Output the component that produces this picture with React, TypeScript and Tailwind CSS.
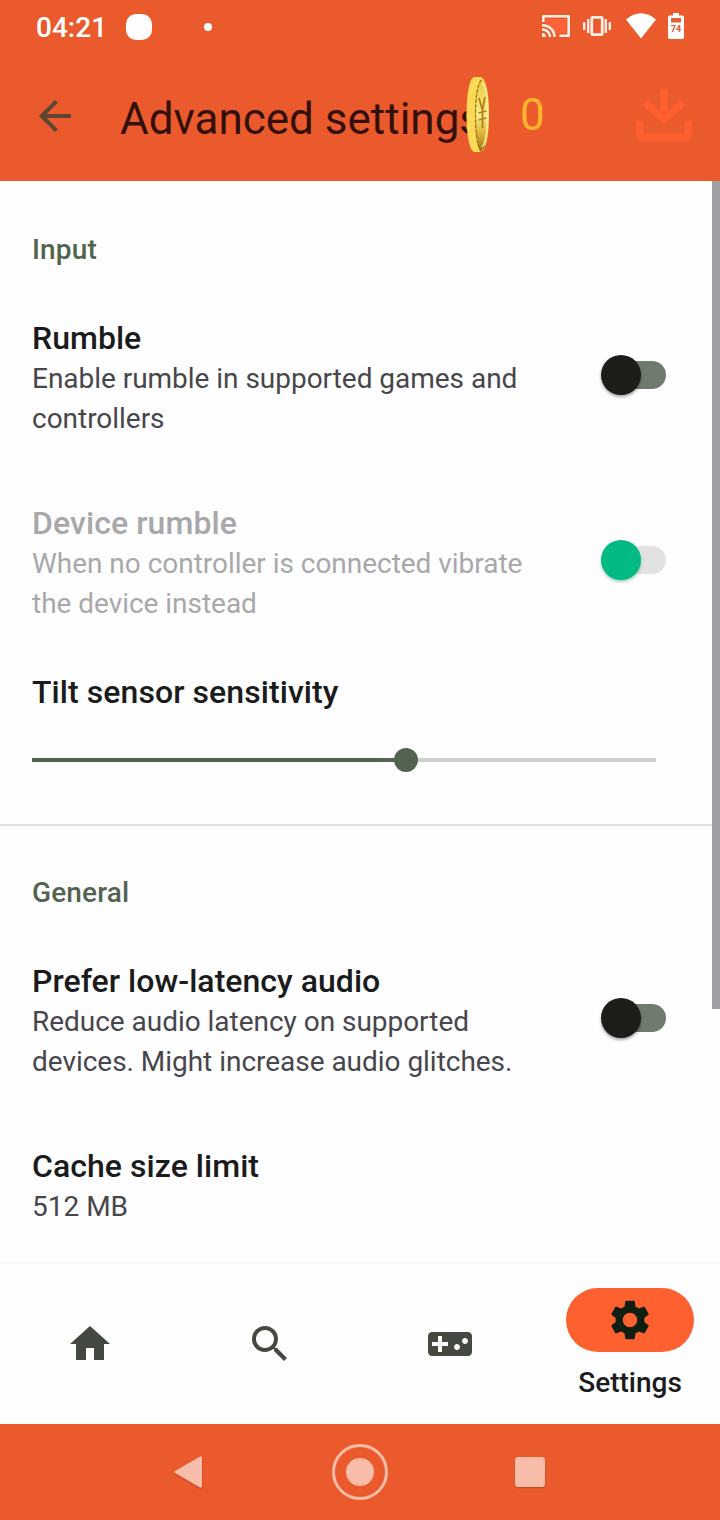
import React, { useState } from "react";
import {
  MdArrowBack,
  MdHome,
  MdSearch,
  MdSettings,
  MdVideogameAsset,
} from "react-icons/md";

type SwitchRowProps = {
  title: string;
  lines: string[];
  disabled?: boolean;
};

function StatusBar() {
  return (
    <div className="flex h-[54px] items-center justify-between pl-9 pr-9 text-white">
      <div className="flex items-center">
        <span className="w-[90px] pt-0.5 text-[28px] leading-[52px] font-medium">
          04:21
        </span>
        <span className="h-[26px] w-[26px] rounded-[10px] bg-white" />
        <span className="ml-[52px] h-2 w-2 rounded-full bg-white" />
      </div>
      <div className="flex items-center pb-0.5">
        <svg width="28" height="22" viewBox="0 0 28 22" fill="none">
          <path d="M4 4h20v14H15L4 8z" fill="#ff6138" />
          <path
            d="M1.300 7V1.300h25.400v19.400H17.500"
            stroke="#ffeee6"
            strokeWidth="2.600"
            strokeLinejoin="round"
          />
          <path
            d="M0 10.200A11.800 11.800 0 0 1 12.500 22M0 14.600a7.400 7.400 0 0 1 8 7.400"
            stroke="#ffeee6"
            strokeWidth="2.600"
          />
          <path d="M0 18a4 4 0 0 1 4 4H0z" fill="#ffeee6" />
        </svg>
        <svg
          className="ml-[13px]"
          width="28"
          height="22"
          viewBox="0 0 28 22"
          fill="none"
          stroke="#ffeee6"
        >
          <rect
            x="8.800"
            y="2.300"
            width="10.400"
            height="17.400"
            rx="1"
            strokeWidth="2.800"
          />
          <path d="M1.200 7v8M5.200 4v14M22.800 4v14M26.800 7v8" strokeWidth="2.400" />
        </svg>
        <svg
          className="ml-[15px]"
          width="30"
          height="26"
          viewBox="0 0 30 26"
          fill="#fff"
        >
          <path d="M0 6.500Q15-6 30 6.500L15 25.500z" />
        </svg>
        <svg
          className="ml-3"
          width="16"
          height="26"
          viewBox="0 0 16 26"
          fill="#fff"
        >
          <path d="M5 0h6v2.500h3.500Q16 2.500 16 4v20.500Q16 26 14.500 26h-13Q0 26 0 24.500V4Q0 2.500 1.500 2.500H5z" />
          <path d="M3 5h10v4.500H3z" fill="#e06239" />
          <text
            x="8"
            y="18.500"
            textAnchor="middle"
            fontSize="9"
            fontWeight="700"
            fill="#d9572e"
          >
            74
          </text>
        </svg>
      </div>
    </div>
  );
}

function Coin() {
  return (
    <svg
      className="absolute top-[23px] left-[466px]"
      width="24"
      height="75"
      viewBox="0 0 24 75"
    >
      <defs>
        <linearGradient id="face" x1="0" y1="0" x2="0" y2="1">
          <stop offset="0" stopColor="#e5c64a" />
          <stop offset=".25" stopColor="#f3da62" />
          <stop offset=".5" stopColor="#fbe98c" />
          <stop offset=".75" stopColor="#dfb63a" />
          <stop offset="1" stopColor="#9a7418" />
        </linearGradient>
      </defs>
      <path
        d="M8 0h7C21 3 23 20 23 37.500S21 74 14 75H8C3 73 .5 56 .5 37.500S3 2 8 0z"
        fill="#fdda55"
      />
      <path
        d="M15 2.500C20 4 22.500 20 22.500 37.500S20 72 14.500 74C11 68 9.500 54 9.500 37.500S11.500 8 15 2.500z"
        fill="url(#face)"
      />
      <path
        d="M15 3C11.500 8 9.500 21 9.500 37.500S11 68 14.500 74c2-.5 3-3 4-6"
        stroke="#967012"
        strokeWidth="1.200"
        strokeDasharray="4 1"
        fill="none"
      />
      <path
        d="M16 6c4 3 5.500 16 5.500 31.500S19.500 67 16 70"
        stroke="#fdf0a6"
        strokeWidth="1.200"
        fill="none"
      />
      <path
        d="M13 21l3.500 12L19 20M16.500 31v20M12.500 36l8-2M12.500 43l8-2"
        stroke="#ad8414"
        strokeWidth="1.800"
        fill="none"
      />
    </svg>
  );
}

function AppBar() {
  return (
    <div className="relative flex h-[127px] items-center pb-[3px]">
      <MdArrowBack className="ml-[31px] size-12 text-[#5b4635]" />
      <h1 className="ml-[41px] w-[400px] pt-[5px] text-[44px] leading-[56px] font-normal whitespace-nowrap text-[#34100a]">
        Advanced settings
      </h1>
      <Coin />
      <span className="-mt-0.5 text-[44px] leading-[56px] text-[#fbb42b]">
        0
      </span>
      <svg
        className="absolute top-[35px] left-[636px]"
        width="56"
        height="53"
        viewBox="0 0 56 53"
        fill="none"
        stroke="#ff5f2f"
        strokeWidth="7.500"
      >
        <path d="M28 0v29" />
        <path d="M11.500 16L28 30.500L44.500 16" strokeLinecap="round" strokeLinejoin="round" />
        <path d="M3.750 32v12.500q0 4 4 4h40.500q4 0 4-4V32" />
      </svg>
    </div>
  );
}

function SwitchRow({ title, lines, disabled = false }: SwitchRowProps) {
  const [checked, setChecked] = useState(false);

  return (
    <div
      className="flex h-[120px] justify-between pr-[54px] pl-8"
      onClick={() => !disabled && setChecked(!checked)}
    >
      <div className={disabled ? "text-[#a8a8ab]" : "text-[#47464c]"}>
        <div
          className={
            disabled
              ? "mb-px text-[32px] leading-10 font-medium tracking-[0.08px]"
              : "mb-px text-[32px] leading-10 font-medium tracking-[0.03px] text-[#1a1b1c]"
          }
        >
          {title}
        </div>
        {lines.map((line) => (
          <div
            key={line}
            className="text-[28px] leading-10 tracking-[-0.03px] whitespace-nowrap"
          >
            {line}
          </div>
        ))}
      </div>
      <div className="mt-[37px] flex h-10 w-[65px] items-center">
        <div
          className={
            disabled
              ? "ml-0.5 flex h-7 w-[63px] items-center rounded-full bg-[#e2e2e2]"
              : "ml-0.5 flex h-7 w-[63px] items-center rounded-full bg-[#717a6f]"
          }
        >
          <div
            className={
              disabled
                ? "-ml-[2px] size-10 shrink-0 rounded-full bg-[#03b985] shadow-[0_2px_3px_rgba(0,120,80,0.35)]"
                : checked
                  ? "ml-[25px] size-10 shrink-0 rounded-full bg-[#1b1d19] shadow-[0_2px_3px_rgba(0,0,0,0.35)]"
                  : "-ml-[2px] size-10 shrink-0 rounded-full bg-[#1b1d19] shadow-[0_2px_3px_rgba(0,0,0,0.35)]"
            }
          />
        </div>
      </div>
    </div>
  );
}

function SectionTitle({ children }: { children: React.ReactNode }) {
  return (
    <h2 className="pl-8 text-[28px] leading-10 font-medium tracking-[0.15px] text-[#52644f]">
      {children}
    </h2>
  );
}

function BottomNav() {
  return (
    <nav className="grid h-[162px] grid-cols-4 border-t-2 border-[#f6f6f6] bg-[#fefefe] text-[#434840]">
      <div className="flex items-center justify-center">
        <MdHome className="size-12" />
      </div>
      <div className="flex items-center justify-center">
        <MdSearch className="size-12" />
      </div>
      <div className="flex items-center justify-center">
        <MdVideogameAsset className="size-12" />
      </div>
      <div className="flex flex-col items-center pt-6">
        <div className="flex h-16 w-32 items-center justify-center rounded-full bg-[#ff602f]">
          <MdSettings className="size-12 text-[#101f10]" />
        </div>
        <span className="mt-[11px] text-[28px] leading-10 font-medium text-[#1a1b1c]">
          Settings
        </span>
      </div>
    </nav>
  );
}

function SystemNav() {
  return (
    <div className="flex h-24 items-center bg-[#eb5a2c] pl-[173px] text-[#f8bda9]">
      <svg
        className="drop-shadow-[0_1px_1px_rgba(0,0,0,0.2)]"
        width="30"
        height="34"
        viewBox="0 0 30 34"
        fill="currentColor"
      >
        <path d="M2 16L27 1.500Q29 .8 29 3v28q0 2.200-2 1.500L2 18Q0 17 2 16z" />
      </svg>
      <div className="ml-[129px] flex size-14 items-center justify-center rounded-full border-[3px] border-current">
        <div className="size-7 rounded-full bg-current" />
      </div>
      <div className="ml-[127px] size-[30px] rounded-[3px] bg-current shadow-[0_1px_2px_rgba(0,0,0,0.2)]" />
    </div>
  );
}

export default function App() {
  return (
    <div className="flex h-[1520px] w-[720px] flex-col overflow-hidden bg-[#fefefe] font-[Roboto,sans-serif]">
      <header className="h-[181px] shrink-0 bg-[#eb5a2c]">
        <StatusBar />
        <AppBar />
      </header>

      <main className="relative h-[1081px] shrink-0 overflow-hidden">
        <section className="h-[645px] border-b-2 border-[#dedede] pt-[49px]">
          <SectionTitle>Input</SectionTitle>
          <div className="mt-12 flex flex-col gap-[65px]">
            <SwitchRow
              title="Rumble"
              lines={["Enable rumble in supported games and", "controllers"]}
            />
            <SwitchRow
              title="Device rumble"
              lines={[
                "When no controller is connected vibrate",
                "the device instead",
              ]}
              disabled
            />
          </div>
          <div className="mt-[49px] pr-16 pl-8">
            <div className="text-[32px] leading-10 font-medium tracking-[0.07px] text-[#1a1b1c]">
              Tilt sensor sensitivity
            </div>
            <div className="mt-9 flex h-6 items-center">
              <div className="h-1 w-[362px] bg-[#52644f]" />
              <div className="size-6 rounded-full bg-[#52644f]" />
              <div className="h-1 flex-1 bg-[#cfcfcf]" />
            </div>
          </div>
        </section>

        <section className="pt-[47px]">
          <SectionTitle>General</SectionTitle>
          <div className="mt-12 flex flex-col gap-[65px]">
            <SwitchRow
              title="Prefer low-latency audio"
              lines={[
                "Reduce audio latency on supported",
                "devices. Might increase audio glitches.",
              ]}
            />
            <div className="pl-8">
              <div className="mb-px text-[32px] leading-10 font-medium tracking-[0.05px] text-[#1a1b1c]">
                Cache size limit
              </div>
              <div className="text-[28px] leading-10 text-[#47464c]">512 MB</div>
            </div>
          </div>
        </section>

        {/* scrollbar thumb */}
        <div className="absolute top-0 right-0 h-[828px] w-2 bg-[#9f9ea4]" />
      </main>

      <BottomNav />
      <SystemNav />
    </div>
  );
}
